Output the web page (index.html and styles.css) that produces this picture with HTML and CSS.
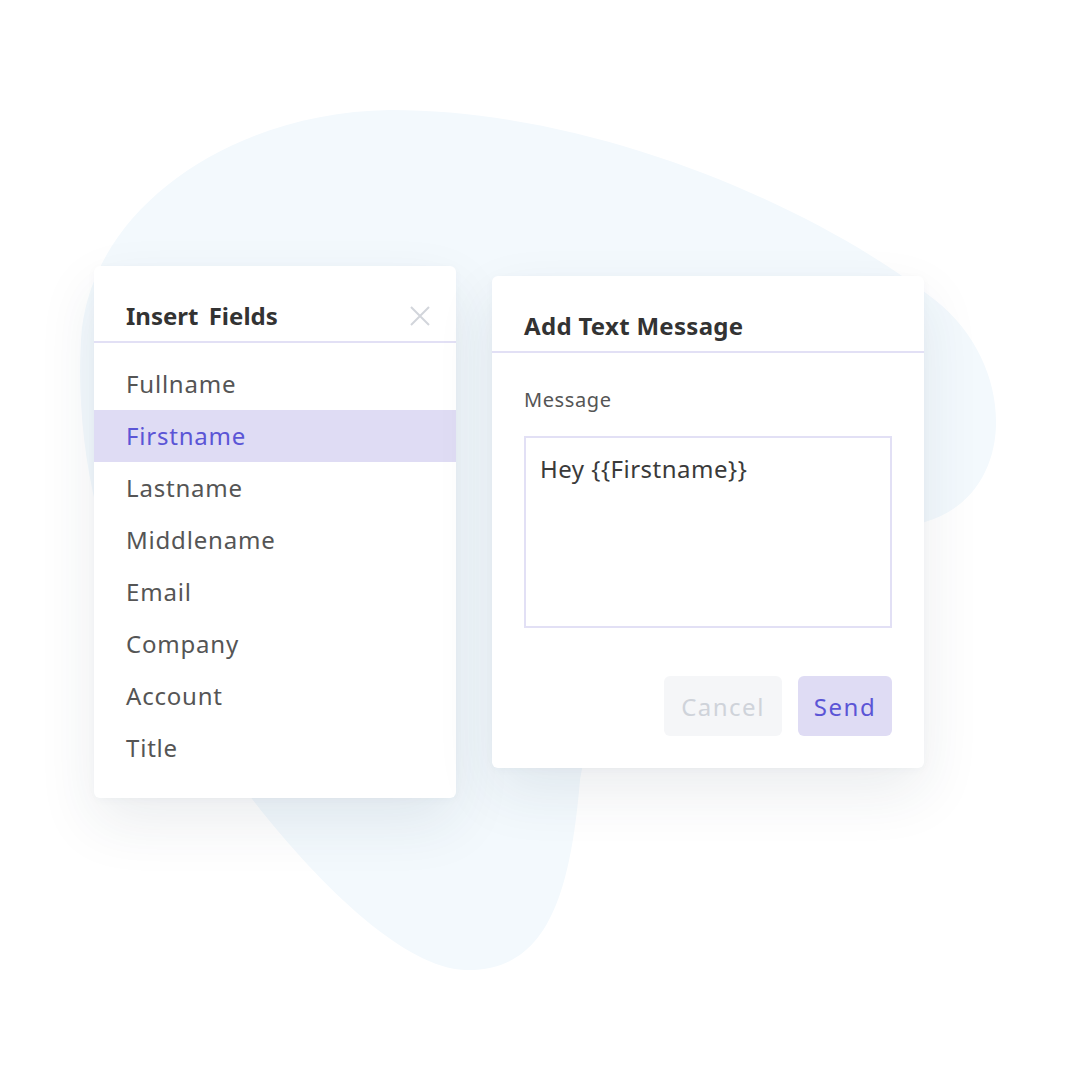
FILE: index.html
```html
<!DOCTYPE html>
<html>
<head>
<meta charset="utf-8">
<link rel="stylesheet" href="styles.css">
</head>
<body>
<div class="stage">
  <svg class="blob" width="1080" height="1080" viewBox="0 0 1080 1080">
    <path d="M390 110 C600 110 820 210 935 300 C1018 365 1018 495 925 522 C800 570 600 640 580 780 C570 900 545 972 465 970 C380 966 250 812 170 680 C100 570 75 450 81 340 C88 210 230 112 390 110 Z" fill="#f3f9fd"/>
  </svg>

  <section class="card fields">
    <header class="card-head">
      <h2 class="card-title spaced">Insert Fields</h2>
      <svg class="close" width="20" height="20" viewBox="0 0 20 20">
        <path d="M1 1 L19 19 M19 1 L1 19" stroke="#d2d5db" stroke-width="2" fill="none"/>
      </svg>
    </header>
    <ul class="field-list">
      <li class="field">Fullname</li>
      <li class="field active">Firstname</li>
      <li class="field">Lastname</li>
      <li class="field">Middlename</li>
      <li class="field">Email</li>
      <li class="field">Company</li>
      <li class="field">Account</li>
      <li class="field">Title</li>
    </ul>
  </section>

  <section class="card message">
    <header class="card-head">
      <h2 class="card-title">Add Text Message</h2>
    </header>
    <div class="card-body">
      <div class="label">Message</div>
      <div class="textarea">Hey {{Firstname}}</div>
      <div class="actions">
        <button class="btn cancel">Cancel</button>
        <button class="btn send">Send</button>
      </div>
    </div>
  </section>
</div>
</body>
</html>
```

FILE: styles.css
```css
* { box-sizing: border-box; }
html, body { margin: 0; padding: 0; background: #ffffff; }
body {
  font-family: "Noto Sans", "Open Sans", sans-serif;
  color: #555555;
}
.stage {
  position: relative;
  width: 1080px;
  height: 1080px;
  display: flex;
  align-items: flex-start;
  gap: 36px;
  padding: 266px 0 0 94px;
  overflow: hidden;
}
.blob {
  position: absolute;
  left: 0;
  top: 0;
  z-index: 0;
}
.card {
  position: relative;
  z-index: 1;
  background: #ffffff;
  border-radius: 6px;
  box-shadow: 0 24px 60px rgba(30, 50, 80, 0.09), 0 2px 8px rgba(30, 50, 80, 0.03);
}
.fields { width: 362px; height: 532px; }
.message { width: 432px; height: 492px; margin-top: 10px; }

.card-head {
  display: flex;
  align-items: center;
  justify-content: space-between;
  padding: 34px 26px 9px 32px;
  border-bottom: 2px solid #e2e0f5;
}
.card-title {
  margin: 0;
  font-size: 24px;
  line-height: 32px;
  font-weight: 700;
  letter-spacing: 0.3px;
  color: #333333;
}
.card-title.spaced { word-spacing: 4px; letter-spacing: 0; }
.close { display: block; }

.field-list {
  list-style: none;
  margin: 0;
  padding: 15px 0 24px;
}
.field {
  height: 52px;
  line-height: 52px;
  padding-left: 32px;
  font-size: 24px;
  letter-spacing: 0.8px;
  color: #555555;
}
.field.active {
  background: #dfdcf4;
  color: #5b55d6;
}

.card-body {
  padding: 35px 32px 32px;
}
.label {
  font-size: 20px;
  line-height: 24px;
  letter-spacing: 0.6px;
  color: #555555;
}
.textarea {
  margin-top: 24px;
  height: 192px;
  border: 2px solid #e2e0f5;
  padding: 15px 14px;
  font-size: 24px;
  line-height: 32px;
  letter-spacing: 0.5px;
  color: #3a3a3a;
}
.actions {
  display: flex;
  justify-content: flex-end;
  gap: 16px;
  margin-top: 48px;
}
.btn {
  height: 60px;
  border: none;
  border-radius: 6px;
  font-family: inherit;
  font-size: 24px;
  letter-spacing: 1.5px;
  padding: 0;
}
.cancel { width: 118px; background: #f5f6f8; color: #cfd3da; }
.send { width: 94px; background: #dfdcf4; color: #5b55d6; }
```
